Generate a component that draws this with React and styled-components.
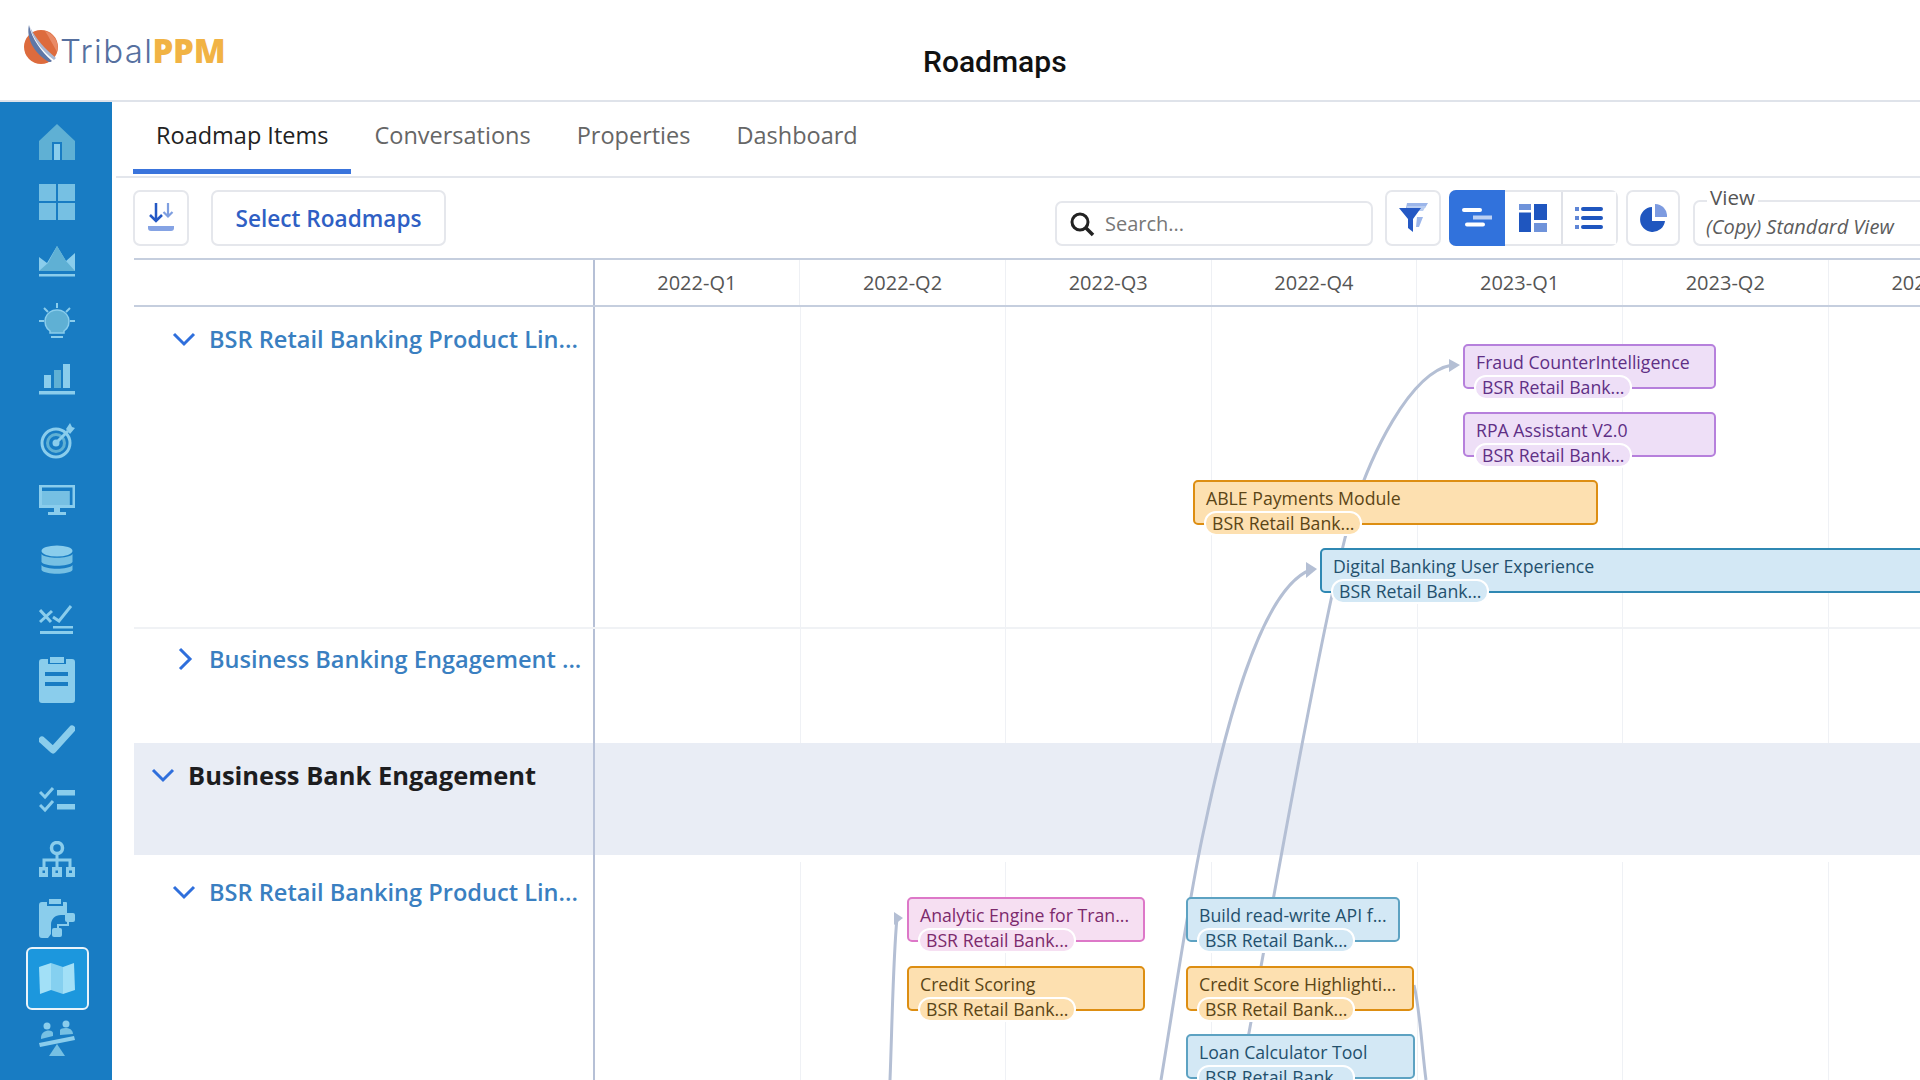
import React from 'react';
import styled, { createGlobalStyle } from 'styled-components';

const GlobalStyle = createGlobalStyle`
  html, body { margin: 0; padding: 0; background: #fff; }
  body { font-family: "Open Sans", "Noto Sans", sans-serif; color: #333; }
  * { box-sizing: border-box; }
`;

const Page = styled.div`
  width: 1920px; height: 1080px; overflow: hidden;
  display: flex; flex-direction: column; background: #fff;
`;
const Header = styled.header`
  height: 102px; flex: none; display: flex; align-items: flex-start;
  border-bottom: 2px solid #dfe3ea; position: relative;
`;
const Logo = styled.div`
  display: flex; align-items: flex-start; margin: 25px 0 0 23px; width: 900px;
`;
const LogoText = styled.div`
  font-family: "Inter", sans-serif; font-size: 33px; font-weight: 300; color: #56709f;
  line-height: 40px; margin: 6px 0 0 1px; letter-spacing: 1.4px;
  b { font-family: "Open Sans", sans-serif; font-weight: 800; color: #f1b344; letter-spacing: -0.2px; margin-left: -1px; }
`;
const Title = styled.h1`
  margin: 43px 0 0 0; font: 500 30px/38px Roboto, sans-serif; color: #111;
`;
const Body = styled.div`flex: 1; display: flex; min-height: 0;`;
const Sidebar = styled.nav`
  width: 112px; flex: none; background: #187cc3; padding: 10px 0 0 2px;
  display: flex; flex-direction: column; align-items: center;
`;
const NavItem = styled.div`
  width: 63px; height: ${p => p.$active ? 63 : 59.75}px; margin: ${p => p.$active ? '-1.625px 0' : '0'};
  flex: none; display: flex; align-items: center; justify-content: center;
  border-radius: 6px;
  background: ${p => p.$active ? '#1c97dd' : 'transparent'};
  border: 2px solid ${p => p.$active ? '#e9f3fa' : 'transparent'};
`;
const Main = styled.main`flex: 1; min-width: 0; display: flex; flex-direction: column; overflow: hidden;`;
const Tabs = styled.div`
  height: 76px; flex: none; margin-left: 4px; padding-left: 17px; display: flex;
  border-bottom: 2px solid #e3e6ec;
`;
const Tab = styled.div`
  height: 72px; padding: 15px 23px 0; font-size: 23.5px; line-height: 36px; font-weight: 500;
  color: ${p => p.$active ? '#222' : '#666'};
  border-bottom: 5px solid ${p => p.$active ? '#3a74dc' : 'transparent'};
`;
const Toolbar = styled.div`
  height: 80px; flex: none; margin-left: 21px; padding-top: 12px; display: flex; align-items: flex-start;
`;
const IconButton = styled.button`
  width: ${p => p.$w || 56}px; height: 56px; flex: none; padding: 0; margin: 0 0 0 ${p => p.$ml || 0}px;
  display: flex; align-items: center; justify-content: center;
  background: #fff; border: 2px solid #e5e7ec; border-radius: 7px;
`;
const TextButton = styled.button`
  width: 235px; height: 56px; margin-left: 22px; padding: 0; background: #fff;
  border: 2px solid #e5e7ec; border-radius: 7px;
  font: 600 22.6px "Open Sans", sans-serif; color: #2f5fc4;
`;
const RightGroup = styled.div`margin-left: auto; margin-right: -14px; display: flex; align-items: flex-start;`;
const Search = styled.div`
  width: 318px; height: 45px; margin-top: 11px; display: flex; align-items: center; padding-left: 12px;
  border: 2px solid #e5e7ec; border-radius: 7px;
  font-size: 20px; color: #777;
  span { margin-left: 10px; }
`;
const Segment = styled.div`
  width: 169px; height: 56px; margin-left: 8px; display: flex; border: 2px solid #e5e7ec; border-radius: 7px;
`;
const SegmentCell = styled.div`
  flex: ${p => p.$grow}; display: flex; align-items: center; justify-content: center;
  background: ${p => p.$active ? '#3172dc' : '#fff'};
  margin: ${p => p.$active ? '-2px 0 -2px -2px' : '0'};
  border-radius: ${p => p.$active ? '7px 0 0 7px' : '0'};
  border-left: ${p => p.$sep ? '2px solid #e0e2e8' : 'none'};
`;
const ViewField = styled.fieldset`
  width: 241px; height: 56px; margin: 0 0 0 13px; padding: 0 0 0 11px; min-width: 0;
  border: 2px solid #e5e7ec; border-radius: 7px;
`;
const ViewLegend = styled.legend`
  margin-left: 1px; padding: 0 3px; font-size: 20.5px; line-height: 22px; color: #555; position: relative; top: -4px;
`;
const ViewValue = styled.div`font-size: 20px; line-height: 30px; margin-top: 0; font-style: italic; color: #5c5c5c; white-space: nowrap;`;

const Gantt = styled.section`margin-left: 22px; flex: 1; min-height: 0; position: relative; overflow: hidden;`;
const GanttHead = styled.div`
  height: 49px; display: flex; border-top: 2px solid #c5cede; border-bottom: 2px solid #c5cede;
`;
const LabelHead = styled.div`width: 460.5px; flex: none; border-right: 2px solid #b6c0d6;`;
const Quarter = styled.div`
  width: 205.7px; flex: none; text-align: center; font-size: 20px; line-height: 45px; color: #555;
  border-right: 1px solid #eef0f4;
`;
const Row = styled.div`
  height: ${p => p.$h}px; margin-top: ${p => p.$mt || 0}px; display: flex;
  background: ${p => p.$band ? '#e9edf5' : 'transparent'};
  border-bottom: ${p => p.$line ? '2px solid #f0f2f5' : 'none'};
`;
const LabelCell = styled.div`
  width: 460.5px; flex: none; border-right: 2px solid ${p => p.$band ? '#b9c3d9' : '#b6c0d6'};
  display: flex; align-items: flex-start; padding: ${p => p.$pt}px 0 0 ${p => p.$pl}px;
`;
const Chevron = styled.svg`width: 24px; height: 24px; flex: none; margin-top: 3px;`;
const RowLabel = styled.div`
  margin-left: ${p => p.$ml}px; white-space: nowrap;
  font-size: ${p => p.$band ? 25.5 : 23.6}px; line-height: 30px; font-weight: ${p => p.$band ? 700 : 600};
  color: ${p => p.$band ? '#1d1d1f' : '#3a7fc1'};
`;
const Lane = styled.div`
  flex: 1;
  background: ${p => p.$band ? 'none' : 'repeating-linear-gradient(to right, transparent 0, transparent 204.7px, #eff1f5 204.7px, #eff1f5 205.7px)'};
`;
const Links = styled.svg`position: absolute; left: 0; top: 48px; width: 1786px; height: 774px; pointer-events: none;`;
const Bars = styled.div`position: absolute; left: 0; top: 48px; width: 1786px; height: 774px; pointer-events: none;`;
const tones = {
  purple: { bg: '#eedff7', line: '#b680dc', ink: '#5f2f85' },
  orange: { bg: '#fde0b0', line: '#dd8e12', ink: '#5b4516' },
  blue: { bg: '#d3e8f5', line: '#2f88b3', ink: '#23506d' },
  softblue: { bg: '#d3e8f5', line: '#5da2c2', ink: '#23506d' },
  pink: { bg: '#f6dff2', line: '#dd78c8', ink: '#7c2a6c' },
};
const Bar = styled.div`
  position: absolute;
  left: ${p => p.$x - 134}px; top: ${p => p.$y - 306}px; width: ${p => p.$w}px; height: ${p => p.$h}px;
  background: ${p => tones[p.$tone].bg}; border: 2px solid ${p => tones[p.$tone].line}; border-radius: 5px;
  color: ${p => tones[p.$tone].ink};
  display: flex; flex-direction: column; align-items: flex-start; padding: 5px 0 0 11px;
  font-size: 17.7px; white-space: nowrap;
`;
const BarTitle = styled.div`line-height: 22px; height: 22px;`;
const Pill = styled.div`
  flex: none; margin: 2px 0 0 -2px; height: 25px; padding: 0 6px; line-height: 20px; border-radius: 12px;
  background: ${p => tones[p.$tone].bg}; border: 2px solid #fff;
`;

const A = '#76c0e3', B = '#5fb0d4', C = '#8acdec', N = '#187cc3';
const Ico = ({ children, w = 36, h = 36 }) => <svg width={w} height={h} viewBox="0 0 36 36">{children}</svg>;
const icons = [
  <Ico><path d="M18 0 36 17V36H0V17Z" fill={B} /><path d="M13 18H23V36H13Z" fill={N} /><path d="M15 20H21V36H15Z" fill={C} /></Ico>,
  <Ico><path d="M0 0H17V17H0ZM19 0H36V17H19ZM0 19H17V36H0ZM19 19H36V36H19Z" fill={A} /></Ico>,
  <Ico><path d="M0 14 8 20 18 3 27 18 36 10V28H0Z" fill={C} /><path d="M0 28 9 20 18 3 27 18 36 28Z" fill={B} /><path d="M0 31H36V33.500H0Z" fill={C} /></Ico>,
  <Ico><path d="M18 0V5M5 5 9 9M31 5 27 9M0 18H5M31 18H36" stroke={C} strokeWidth="2" /><path d="M18 7A11.500 11.500 0 0 0 11 28V30H25V28A11.500 11.500 0 0 0 18 7Z" fill={B} stroke={C} strokeWidth="1.500" /><path d="M12 33H24V35H12Z" fill={C} /></Ico>,
  <Ico><path d="M5 12H12V25H5Z" fill={C} /><path d="M15 7H22V25H15Z" fill={B} /><path d="M24 1H31V25H24Z" fill={C} /><path d="M0 28H36V31.500H0Z" fill={C} /></Ico>,
  <Ico><circle cx="17" cy="20" r="14" fill="none" stroke={C} strokeWidth="3" /><circle cx="17" cy="20" r="8.500" fill="none" stroke={B} strokeWidth="3" /><circle cx="17" cy="20" r="3.500" fill={C} /><path d="M17 20 29 8" stroke={C} strokeWidth="3" /><path d="M27 6 31 0 33 4 36 5 31 11Z" fill={C} /></Ico>,
  <svg width="36" height="30" viewBox="0 0 36 30"><path d="M0 0H36V23H0Z" fill={C} /><path d="M3 2.500H33.500V20H30.500V6H3Z" fill={N} /><path d="M3 6H30.500V20H3Z" fill={A} /><path d="M15 23H21V28H15Z" fill={C} /><path d="M9 27H27V30H9Z" fill={C} /></svg>,
  <svg width="36" height="30" viewBox="0 0 36 30"><ellipse cx="18" cy="6" rx="15.500" ry="5.500" fill={C} /><path d="M2.500 9C6 14 30 14 33.500 9V17C30 22 6 22 2.500 17Z" fill={A} /><path d="M2.500 20C6 25 30 25 33.500 20V25C30 30 6 30 2.500 25Z" fill={A} /></svg>,
  <Ico><path d="M1 8 12 20M1 20 13 9M14 15 20 19 32 4" stroke={C} fill="none" strokeWidth="3" /><path d="M14 24H34V26.500H14ZM1 29H34V32H1Z" fill={C} /></Ico>,
  <svg width="36" height="46" viewBox="0 0 36 46"><path d="M3 2H9V7H27V2H33A3 3 0 0 1 36 5V43A3 3 0 0 1 33 46H3A3 3 0 0 1 0 43V5A3 3 0 0 1 3 2Z" fill={C} /><path d="M11 0H25V6H11Z" fill={C} /><path d="M6 15H29V19H6ZM6 25H29V29H6Z" fill={N} /></svg>,
  <Ico><path d="M3 19 14 29 33 8" fill="none" stroke={C} strokeWidth="7" strokeLinecap="round" strokeLinejoin="round" /></Ico>,
  <Ico><path d="M1 11 6 16 14 7M1 24 6 29 14 20" fill="none" stroke={C} strokeWidth="3" /><path d="M18 9H36V14.500H18ZM18 23H36V28.500H18Z" fill={C} /></Ico>,
  <Ico><circle cx="18" cy="7" r="5.500" fill="none" stroke={C} strokeWidth="3.500" /><path d="M18 12V19M5 28V19H31V28M18 19V28" fill="none" stroke={C} strokeWidth="3" /><path d="M0 26H9V36H0ZM13 26H23V36H13ZM27 26H36V36H27Z" fill={C} /><path d="M3.500 29.500H6V32H3.500ZM16.500 29.500H19V32H16.500ZM30 29.500H33V32H30Z" fill={N} /></Ico>,
  <svg width="36" height="40" viewBox="0 0 36 40"><path d="M3 3H8V7H24V3H27A1 1 0 0 1 28 4V16H22C16 16 12 20 12 26V35L9 39H3A3 3 0 0 1 0 36V6A3 3 0 0 1 3 3Z" fill={C} /><path d="M10 0H22V5H10Z" fill={C} /><rect x="26" y="14" width="10" height="9" rx="2" fill={C} /><rect x="13" y="29" width="10" height="9" rx="2" fill={C} /><path d="M29 22V26H19V30" fill="none" stroke={C} strokeWidth="2" /></svg>,
  <Ico><path d="M0 7 12 3V30L1 34Z" fill="#a2e0f7" /><path d="M12 3 24 7V34L12 30Z" fill="#85d0f0" /><path d="M24 7 35 3 36 30 24 34Z" fill="#a2e0f7" /></Ico>,
  <Ico><circle cx="8" cy="6" r="3.500" fill={C} /><circle cx="27" cy="4" r="3.500" fill={C} /><path d="M2 18C2 9 14 9 14 13V16L2 19ZM21 15V10C23 7 34 7 34 14Z" fill={A} /><path d="M0 23 35 16 36 20 1 27Z" fill={C} /><path d="M18 24 26 36H10Z" fill={A} /></Ico>,
];

const ChevronIcon = ({ open }) => (
  <Chevron viewBox="0 0 24 24">
    <path d={open ? 'M2 7 12 17 22 7' : 'M7 2 17 12 7 22'} fill="none" stroke="#2f6fdc" strokeWidth="3" />
  </Chevron>
);

const bars = [
  { x: 1463, y: 344, w: 253, tone: 'purple', t: 'Fraud CounterIntelligence' },
  { x: 1463, y: 412, w: 253, tone: 'purple', t: 'RPA Assistant V2.0' },
  { x: 1193, y: 480, w: 405, tone: 'orange', t: 'ABLE Payments Module' },
  { x: 1320, y: 548, w: 700, tone: 'blue', t: 'Digital Banking User Experience' },
  { x: 907, y: 897, w: 238, tone: 'pink', t: 'Analytic Engine for Tran...' },
  { x: 907, y: 966, w: 238, tone: 'orange', t: 'Credit Scoring' },
  { x: 1186, y: 897, w: 214, tone: 'softblue', t: 'Build read-write API f...' },
  { x: 1186, y: 966, w: 228, tone: 'orange', t: 'Credit Score Highlighti...' },
  { x: 1186, y: 1034, w: 229, tone: 'softblue', t: 'Loan Calculator Tool' },
];
const quarters = ['2022-Q1', '2022-Q2', '2022-Q3', '2022-Q4', '2023-Q1', '2023-Q2', '2023-Q3'];

export default function App() {
  return (
    <Page>
      <GlobalStyle />
      <Header>
        <Logo>
          <svg width="36" height="40" viewBox="0 0 36 40" style={{ flex: 'none' }}>
            <circle cx="18" cy="22" r="17" fill="#dd6b3d" />
            <path d="M22 6A17 17 0 0 1 34 27C30 20 26 12 22 6Z" fill="#e98a66" />
            <path d="M6 0C5 14 12 30 29 37 31 36 32 35 33 34 20 26 11 14 6 0Z" fill="#fff" />
            <path d="M6 0C3 12 10 28 26 37 27 37 28 37 29 36 18 26 9 14 6 0Z" fill="#5f77a6" />
            <path d="M7 2C10 14 19 26 31 35L33 33C22 24 13 14 7 2Z" fill="#a9b7d2" />
          </svg>
          <LogoText>Tribal<b>PPM</b></LogoText>
        </Logo>
        <Title>Roadmaps</Title>
      </Header>
      <Body>
        <Sidebar>
          {icons.map((icon, i) => <NavItem key={i} $active={i === 14}>{icon}</NavItem>)}
        </Sidebar>
        <Main>
          <Tabs>
            <Tab $active>Roadmap Items</Tab>
            <Tab>Conversations</Tab>
            <Tab>Properties</Tab>
            <Tab>Dashboard</Tab>
          </Tabs>
          <Toolbar>
            <IconButton>
              <svg width="28" height="32" viewBox="0 0 28 32">
                <path d="M9 1V19M3 13 9 19 15 13" fill="none" stroke="#2458c4" strokeWidth="2.500" />
                <path d="M21 1V14M16.500 10 21 14.500 25.500 10" fill="none" stroke="#7f9fe0" strokeWidth="2.200" />
                <path d="M1 24H27V26A3 3 0 0 1 24 29H4A3 3 0 0 1 1 26Z" fill="#85a3e4" />
              </svg>
            </IconButton>
            <TextButton>Select Roadmaps</TextButton>
            <RightGroup>
              <Search>
                <svg width="26" height="26" viewBox="0 0 26 26">
                  <circle cx="11" cy="11" r="8" fill="none" stroke="#222" strokeWidth="3" />
                  <path d="M17 17 24 24" stroke="#222" strokeWidth="3.500" />
                </svg>
                <span>Search...</span>
              </Search>
              <IconButton $ml={12}>
                <svg width="30" height="32" viewBox="0 0 30 32">
                  <path d="M9 1H30L27 6H8Z" fill="#9cb6ea" />
                  <path d="M9 4H28L25 9H9Z" fill="#b9cdf1" />
                  <path d="M19 15H25L21 25H18Z" fill="#9cb6ea" />
                  <path d="M1 6H23L15 17V30L10 26V17Z" fill="#2458c4" />
                </svg>
              </IconButton>
              <Segment>
                <SegmentCell $grow="57" $active>
                  <svg width="30" height="20" viewBox="0 0 30 20">
                    <path d="M2 0H18A2 2 0 0 1 18 4H2A2 2 0 0 1 2 0ZM5 14.500H21A2 2 0 0 1 21 18.500H5A2 2 0 0 1 5 14.500Z" fill="#fff" />
                    <path d="M11 7.500H30V11.500H11Z" fill="#bcd0f3" />
                  </svg>
                </SegmentCell>
                <SegmentCell $grow="56">
                  <svg width="28" height="28" viewBox="0 0 28 28">
                    <path d="M0 0H12V6H0Z" fill="#6f93da" />
                    <path d="M0 8.500H12V28H0Z" fill="#1f56bf" />
                    <path d="M15 0H28V16H15Z" fill="#1f56bf" />
                    <path d="M15 19H28V28H15Z" fill="#6f93da" />
                  </svg>
                </SegmentCell>
                <SegmentCell $grow="54" $sep>
                  <svg width="28" height="22" viewBox="0 0 28 22">
                    <path d="M0 0H4V4H0ZM0 9H4V13H0ZM0 18H4V22H0Z" fill="#5f86d6" />
                    <path d="M8 0H26A2 2 0 0 1 26 4H8A2 2 0 0 1 8 0ZM8 9H26A2 2 0 0 1 26 13H8A2 2 0 0 1 8 9ZM8 18H26A2 2 0 0 1 26 22H8A2 2 0 0 1 8 18Z" fill="#1f56bf" />
                  </svg>
                </SegmentCell>
              </Segment>
              <IconButton $ml={8} $w={54}>
                <svg width="27" height="28" viewBox="0 0 27 28">
                  <path d="M12 3A12.500 12.500 0 1 0 25 17H12Z" fill="#1f56bf" />
                  <path d="M15 0A12 12 0 0 1 27 13H15Z" fill="#7d9be0" />
                </svg>
              </IconButton>
              <ViewField>
                <ViewLegend>View</ViewLegend>
                <ViewValue>(Copy) Standard View</ViewValue>
              </ViewField>
            </RightGroup>
          </Toolbar>
          <Gantt>
            <GanttHead>
              <LabelHead />
              {quarters.map(q => <Quarter key={q}>{q}</Quarter>)}
            </GanttHead>
            <Row $h={322} $line>
              <LabelCell $pt={17} $pl={38}><ChevronIcon open /><RowLabel $ml={13}>BSR Retail Banking Product Lin...</RowLabel></LabelCell>
              <Lane />
            </Row>
            <Row $h={114}>
              <LabelCell $pt={15} $pl={39}><ChevronIcon /><RowLabel $ml={12}>Business Banking Engagement ...</RowLabel></LabelCell>
              <Lane />
            </Row>
            <Row $h={112} $band>
              <LabelCell $band $pt={17} $pl={17}><ChevronIcon open /><RowLabel $band $ml={13}>Business Bank Engagement</RowLabel></LabelCell>
              <Lane $band />
            </Row>
            <Row $h={7}><LabelCell $pt={0} $pl={0} /></Row>
            <Row $h={226}>
              <LabelCell $pt={15} $pl={38}><ChevronIcon open /><RowLabel $ml={13}>BSR Retail Banking Product Lin...</RowLabel></LabelCell>
              <Lane />
            </Row>
            <Links viewBox="134 306 1786 774">
              <g fill="none" stroke="#b4bfd4" strokeWidth="3">
                <path d="M1240 1080C1250 1030 1262 960 1274 895S1320 640 1345 538C1369 450 1412 372 1452 365" />
                <path d="M1161 1080C1176 990 1190 890 1205 825C1225 730 1260 590 1310 570" />
                <path d="M890 1080C892 1030 893 960 897 918" />
                <path d="M1414 985C1420 1010 1422 1050 1426 1080" />
              </g>
              <g fill="#b4bfd4">
                <path d="M1449 359 1460 365 1449 372Z" />
                <path d="M1306 562 1317 569 1306 578Z" />
                <path d="M894 912 903 918 894 925Z" />
              </g>
            </Links>
            <Bars>
              {bars.map(b => (
                <Bar key={b.t} $x={b.x} $y={b.y} $w={b.w} $h={45} $tone={b.tone}>
                  <BarTitle>{b.t}</BarTitle>
                  <Pill $tone={b.tone}>BSR Retail Bank...</Pill>
                </Bar>
              ))}
            </Bars>
          </Gantt>
        </Main>
      </Body>
    </Page>
  );
}
